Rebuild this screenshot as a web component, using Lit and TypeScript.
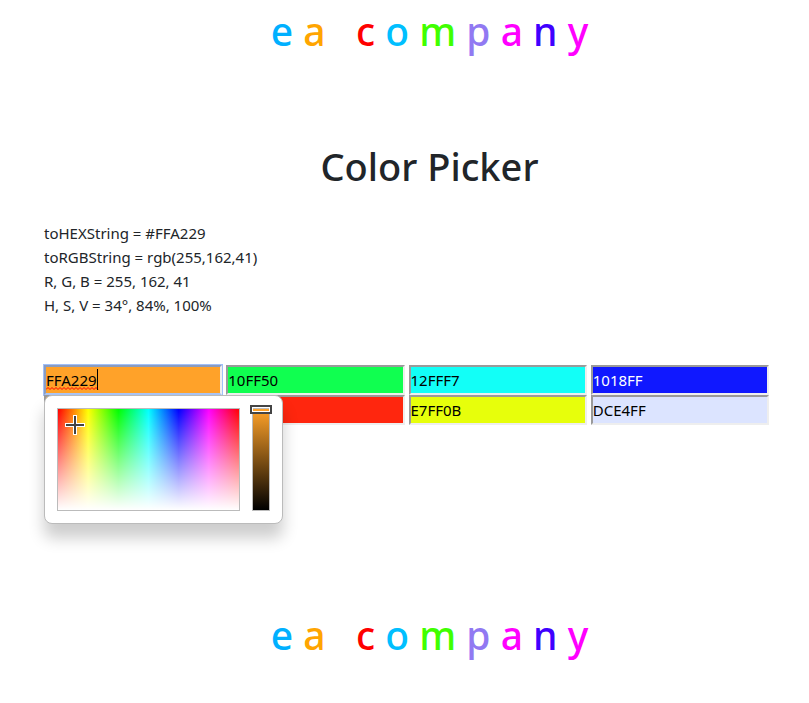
import { LitElement, html, css } from "lit";
import { customElement, property } from "lit/decorators.js";

interface Swatch {
  hex: string;
  light?: boolean;
}

@customElement("company-banner")
export class CompanyBanner extends LitElement {
  static styles = css`
    :host {
      display: block;
      text-align: center;
      font-size: 39px;
      line-height: 48px;
      font-weight: 500;
      white-space: pre;
    }
    .sky { color: #00b0ff; }
    .orange { color: #ffa500; }
    .red { color: #ff0000; }
    .cyan { color: #00bfff; }
    .green { color: #40ff00; }
    .violet { color: #9179f2; }
    .pink { color: #ff00ff; }
    .indigo { color: #4000ff; }
  `;

  render() {
    return html`<span class="sky">e</span> <span class="orange">a</span>   <span class="red">c</span> <span class="cyan">o</span> <span class="green">m</span> <span class="violet">p</span> <span class="pink">a</span> <span class="indigo">n</span> <span class="pink">y</span>`;
  }
}

@customElement("picker-popup")
export class PickerPopup extends LitElement {
  static styles = css`
    :host {
      display: flex;
      gap: 12px;
      box-sizing: border-box;
      padding: 12px;
      border: 1px solid #bbb;
      border-radius: 8px;
      background: #fff;
      box-shadow: 0 14px 16px rgba(0, 0, 0, 0.2);
    }
    .palette,
    .value {
      position: relative;
      box-sizing: border-box;
      height: 103px;
      border: 1px solid #bbb;
    }
    .palette {
      width: 183px;
      background:
        linear-gradient(to bottom, rgba(255, 255, 255, 0), #fff),
        linear-gradient(to right, #f00, #ff0, #0f0, #0ff, #00f, #f0f, #f00);
    }
    .value {
      width: 18px;
      background: linear-gradient(to bottom, #ffa229, #000);
    }
    .cross {
      position: absolute;
      left: 7px;
      top: 6px;
      display: block;
    }
    .thumb {
      position: absolute;
      left: -3px;
      top: -4px;
      display: block;
    }
  `;

  render() {
    return html`
      <div class="palette">
        <svg class="cross" width="20" height="20" viewBox="0 0 20 20" shape-rendering="crispEdges">
          <path d="M8 0h4v8h8v4h-8v8H8v-8H0V8h8z" fill="#fff" />
          <path d="M9 1h2v8h8v2h-8v8H9v-8H1V9h8z" fill="#444" />
        </svg>
      </div>
      <div class="value">
        <svg class="thumb" width="22" height="9" viewBox="0 0 22 9" shape-rendering="crispEdges">
          <path d="M0 0h22v9H0zM2 2v5h18V2z" fill="#444" fill-rule="evenodd" />
          <path d="M2 2h18v5H2zM3 4v2h16V4z" fill="#fff" fill-rule="evenodd" />
          <path d="M3 3h16v1H3z" fill="#bbb" />
        </svg>
      </div>
    `;
  }
}

@customElement("color-field")
export class ColorField extends LitElement {
  @property() hex = "";
  @property({ type: Boolean }) light = false;
  @property({ type: Boolean, reflect: true }) active = false;

  static styles = css`
    :host {
      display: block;
      position: relative;
    }
    input {
      display: block;
      box-sizing: border-box;
      width: 100%;
      height: 30px;
      margin: 0;
      padding: 1px 0;
      border: 2px solid;
      border-color: #9a9a9a #eee #eee #9a9a9a;
      border-radius: 0;
      color: #000;
      font: inherit;
      outline: none;
    }
    .light {
      color: #fff;
    }
    .active {
      border-color: #8a9cc0 #eee #a9c4f5 #8a9cc0;
      box-shadow: 0 0 0 1px #a0c0fa;
    }
    .mark {
      position: absolute;
      left: 2px;
      top: 4px;
      display: block;
      pointer-events: none;
    }
    picker-popup {
      position: absolute;
      z-index: 1;
      left: 0;
      top: 30px;
    }
  `;

  render() {
    const tone = this.light ? "light" : this.active ? "active" : "";
    return html`
      <input
        class=${tone}
        type="text"
        spellcheck="false"
        aria-label="Color ${this.hex}"
        .value=${this.hex}
        style="background-color: #${this.hex}"
      />
      ${this.active
        ? html`
            <svg class="mark" width="53" height="22" viewBox="0 0 53 22">
              <path
                d="M0 20.5 l2-2 2 2 2-2 2 2 2-2 2 2 2-2 2 2 2-2 2 2 2-2 2 2 2-2 2 2 2-2 2 2 2-2 2 2 2-2 2 2 2-2 2 2 2-2 2 2 2-2 2 2"
                fill="none"
                stroke="#f00"
              />
              <path d="M51 0h1v21h-1z" fill="#000" />
            </svg>
            <picker-popup></picker-popup>
          `
        : ""}
    `;
  }
}

@customElement("app-root")
export class AppRoot extends LitElement {
  private swatches: Swatch[] = [
    { hex: "FFA229" },
    { hex: "10FF50" },
    { hex: "12FFF7" },
    { hex: "1018FF", light: true },
    { hex: "FFA229" },
    { hex: "FF260E" },
    { hex: "E7FF0B" },
    { hex: "DCE4FF" },
  ];

  static styles = css`
    :host {
      display: block;
      padding: 7px 40px 40px 44px;
      color: #212529;
      background: #fff;
      font: 15px/24px "Noto Sans", "Open Sans", sans-serif;
    }
    company-banner,
    h1 {
      padding-left: 46px;
    }
    h1 {
      margin: 87px 0 31px;
      text-align: center;
      font-size: 38px;
      line-height: 48px;
      font-weight: 500;
    }
    .readout {
      margin: 0 0 48px;
    }
    .fields {
      display: grid;
      grid-template-columns: repeat(4, 1fr);
      column-gap: 4px;
      margin-bottom: 186px;
    }
  `;

  render() {
    return html`
      <company-banner></company-banner>
      <h1>Color Picker</h1>
      <p class="readout">
        toHEXString = #FFA229<br />
        toRGBString = rgb(255,162,41)<br />
        R, G, B = 255, 162, 41<br />
        H, S, V = 34°, 84%, 100%
      </p>
      <div class="fields">
        ${this.swatches.map(
          (s, i) => html`<color-field .hex=${s.hex} ?light=${s.light} ?active=${i === 0}></color-field>`
        )}
      </div>
      <company-banner></company-banner>
    `;
  }
}
